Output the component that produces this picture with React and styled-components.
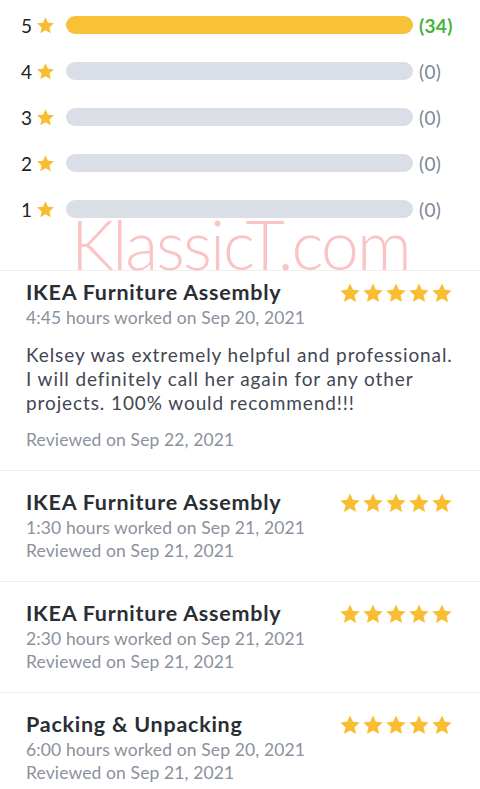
import React from "react";
import styled, { createGlobalStyle } from "styled-components";

const Global = createGlobalStyle`
  html, body { margin: 0; padding: 0; background: #fff; }
  body { font-family: "Lato", "Noto Sans", sans-serif; -webkit-font-smoothing: antialiased; }
`;

const Page = styled.div`
  position: relative;
  width: 480px;
  overflow: hidden;
`;

const Ratings = styled.section`
  padding: 2px 0 38px;
  border-bottom: 1px solid #eeeff2;
`;

const RatingRow = styled.div`
  display: flex;
  align-items: center;
  height: 46px;
  padding-left: 21px;
`;

const Digit = styled.span`
  width: 11px;
  font-size: 19px;
  color: #1f2227;
`;

const RowStar = styled.svg`
  width: 19px;
  height: 19px;
  margin-left: 4px;
  margin-right: 11px;
  flex: none;
`;

const Track = styled.div`
  flex: 1;
  height: 18px;
  border-radius: 9px;
  background: #dadee7;
  overflow: hidden;
`;

const Fill = styled.div`
  height: 100%;
  border-radius: 9px;
  background: #f9c136;
`;

const Count = styled.span`
  width: 67px;
  padding-left: 6px;
  box-sizing: border-box;
  font-size: 19px;
  font-weight: ${(p) => (p.$active ? 700 : 400)};
  color: ${(p) => (p.$active ? "#47b33c" : "#7d8799")};
  letter-spacing: 0.3px;
`;

const Review = styled.article`
  display: flex;
  flex-direction: column;
  padding: ${(p) => (p.$first ? "8px" : "18px")} 27px 19px 26px;
  border-bottom: ${(p) => (p.$last ? "none" : "1px solid #eeeff2")};
`;

const Header = styled.div`
  display: flex;
  justify-content: space-between;
  align-items: center;
`;

const Title = styled.h3`
  margin: 0;
  font-size: 21.5px;
  line-height: 27px;
  font-weight: 700;
  color: #2a2e35;
  letter-spacing: 0.75px;
`;

const Meta = styled.div`
  font-size: 17.5px;
  line-height: 23px;
  color: #8b919d;
  letter-spacing: 0.12px;
  margin-top: ${(p) => p.$gap || 0}px;
`;

const Body = styled.p`
  margin: 14px -5px 0 0;
  font-size: 19px;
  line-height: 24px;
  color: #424753;
  letter-spacing: 0.9px;
`;

const Stars = styled.div`
  display: flex;
  gap: 1px;
  flex: none;
`;

const Watermark = styled.div`
  position: absolute;
  left: 71px;
  top: 219px;
  font-family: "Lato", sans-serif;
  font-weight: 300;
  font-size: 68px;
  line-height: 50px;
  color: #fbc4c4;
  letter-spacing: -2px;
  pointer-events: none;
  white-space: nowrap;
`;

const STAR_PATH =
  "M12 1.6l3.1 6.9 7.5.8-5.6 5.1 1.6 7.4L12 18l-6.6 3.8 1.6-7.4-5.6-5.1 7.5-.8z";

const StarIcon = ({ size = 22 }) => (
  <svg viewBox="0 0 24 24" width={size} height={size}>
    <path fill="#f9bd32" d={STAR_PATH} />
  </svg>
);

const rows = [
  { n: 5, c: 34, pct: 100 },
  { n: 4, c: 0, pct: 0 },
  { n: 3, c: 0, pct: 0 },
  { n: 2, c: 0, pct: 0 },
  { n: 1, c: 0, pct: 0 },
];

const reviews = [
  {
    title: "IKEA Furniture Assembly",
    worked: "4:45 hours worked on Sep 20, 2021",
    body: "Kelsey was extremely helpful and professional. I will definitely call her again for any other projects. 100% would recommend!!!",
    reviewed: "Reviewed on Sep 22, 2021",
  },
  {
    title: "IKEA Furniture Assembly",
    worked: "1:30 hours worked on Sep 21, 2021",
    reviewed: "Reviewed on Sep 21, 2021",
  },
  {
    title: "IKEA Furniture Assembly",
    worked: "2:30 hours worked on Sep 21, 2021",
    reviewed: "Reviewed on Sep 21, 2021",
  },
  {
    title: "Packing & Unpacking",
    worked: "6:00 hours worked on Sep 20, 2021",
    reviewed: "Reviewed on Sep 21, 2021",
  },
];

export default function App() {
  return (
    <Page>
      <Global />
      <Ratings>
        {rows.map((r) => (
          <RatingRow key={r.n}>
            <Digit>{r.n}</Digit>
            <RowStar viewBox="0 0 24 24">
              <path fill="#f9bd32" d={STAR_PATH} />
            </RowStar>
            <Track>
              <Fill style={{ width: `${r.pct}%` }} />
            </Track>
            <Count $active={r.c > 0}>({r.c})</Count>
          </RatingRow>
        ))}
      </Ratings>
      {reviews.map((rv, i) => (
        <Review key={i} $first={i === 0} $last={i === reviews.length - 1}>
          <Header>
            <Title>{rv.title}</Title>
            <Stars>
              {[0, 1, 2, 3, 4].map((k) => (
                <StarIcon key={k} size={22} />
              ))}
            </Stars>
          </Header>
          <Meta>{rv.worked}</Meta>
          {rv.body && <Body>{rv.body}</Body>}
          <Meta $gap={rv.body ? 13 : 0}>{rv.reviewed}</Meta>
        </Review>
      ))}
      <Watermark>KlassicT.com</Watermark>
    </Page>
  );
}
